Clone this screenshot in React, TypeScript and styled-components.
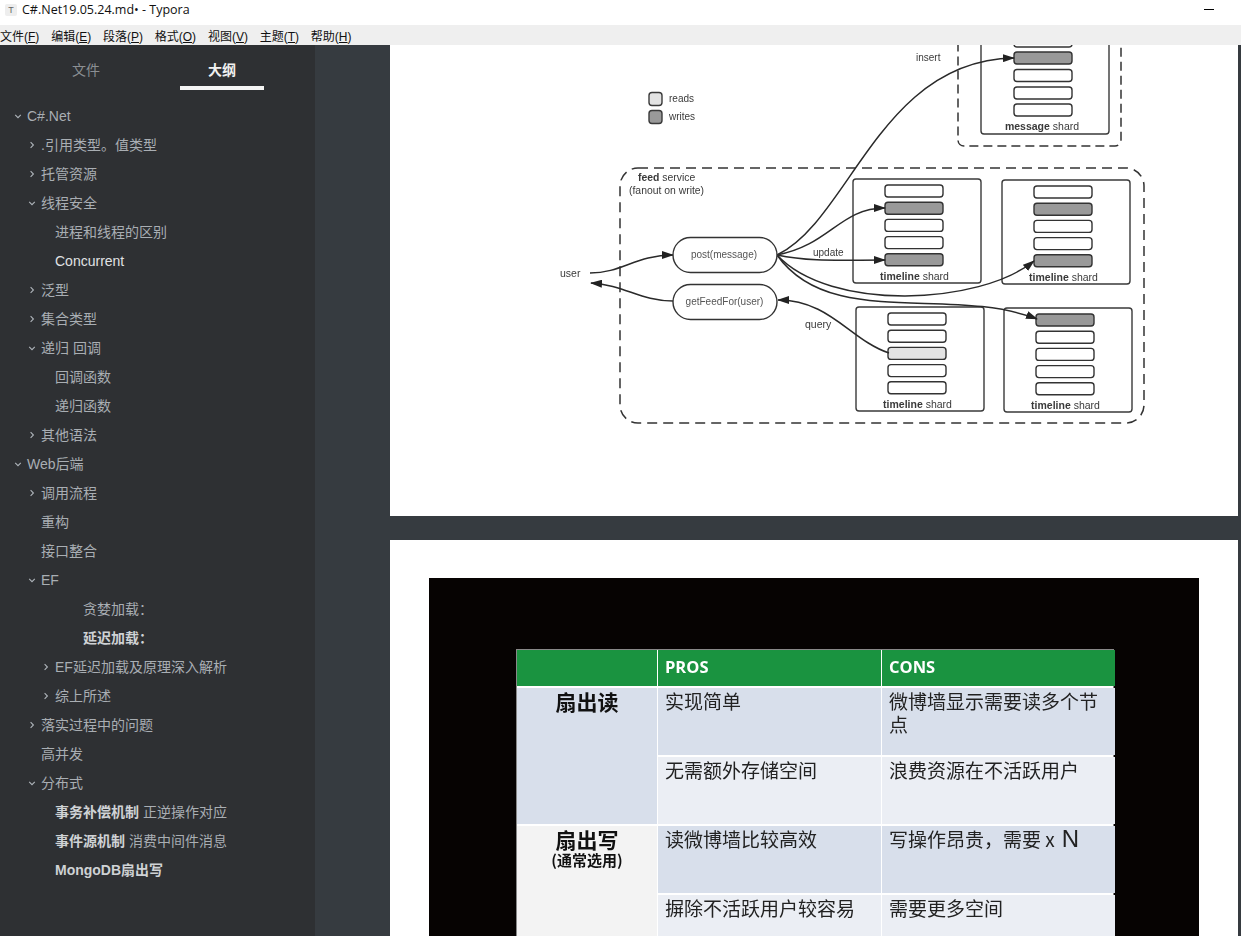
import styled, { createGlobalStyle } from 'styled-components';

const GlobalStyle = createGlobalStyle`
  html, body {
    margin: 0;
    padding: 0;
    height: 100%;
    overflow: hidden;
    background: #363b40;
  }
  * {
    box-sizing: border-box;
  }
`;

const cjk = '"Liberation Sans", "Noto Sans CJK SC", sans-serif';

interface OutlineItem {
  label: string;
  level: number;
  arrow?: 'open' | 'closed';
  strong?: string;
  bright?: boolean;
}

const outline: OutlineItem[] = [
  { label: 'C#.Net', level: 0, arrow: 'open' },
  { label: '.引用类型。值类型', level: 1, arrow: 'closed' },
  { label: '托管资源', level: 1, arrow: 'closed' },
  { label: '线程安全', level: 1, arrow: 'open' },
  { label: '进程和线程的区别', level: 2 },
  { label: 'Concurrent', level: 2, bright: true },
  { label: '泛型', level: 1, arrow: 'closed' },
  { label: '集合类型', level: 1, arrow: 'closed' },
  { label: '递归 回调', level: 1, arrow: 'open' },
  { label: '回调函数', level: 2 },
  { label: '递归函数', level: 2 },
  { label: '其他语法', level: 1, arrow: 'closed' },
  { label: 'Web后端', level: 0, arrow: 'open' },
  { label: '调用流程', level: 1, arrow: 'closed' },
  { label: '重构', level: 1 },
  { label: '接口整合', level: 1 },
  { label: 'EF', level: 1, arrow: 'open' },
  { label: '贪婪加载：', level: 4 },
  { label: '', strong: '延迟加载：', level: 4 },
  { label: 'EF延迟加载及原理深入解析', level: 2, arrow: 'closed' },
  { label: '综上所述', level: 2, arrow: 'closed' },
  { label: '落实过程中的问题', level: 1, arrow: 'closed' },
  { label: '高并发', level: 1 },
  { label: '分布式', level: 1, arrow: 'open' },
  { label: ' 正逆操作对应', strong: '事务补偿机制', level: 2 },
  { label: ' 消费中间件消息', strong: '事件源机制', level: 2 },
  { label: '', strong: 'MongoDB扇出写', level: 2 },
];

const menus = [
  ['文件(', 'F', ')'],
  ['编辑(', 'E', ')'],
  ['段落(', 'P', ')'],
  ['格式(', 'O', ')'],
  ['视图(', 'V', ')'],
  ['主题(', 'T', ')'],
  ['帮助(', 'H', ')'],
];

const Chevron = ({ open }: { open: boolean }) => (
  <svg width="8" height="8" viewBox="0 0 8 8" fill="none" stroke="#aeb4ba" strokeWidth="1.1">
    {open ? <path d="M1.2 2.8 L4 5.6 L6.8 2.8" /> : <path d="M2.6 1.2 L5.4 4 L2.6 6.8" />}
  </svg>
);

const Bar = ({ x, y, fill = '#fff' }: { x: number; y: number; fill?: string }) => (
  <rect x={x} y={y} width="58" height="12" rx="3" fill={fill} stroke="#333" strokeWidth="1.4" />
);

const GRAY = '#999';
const LIGHT = '#e3e3e3';

const Shard = ({
  x,
  y,
  fills,
  name = 'timeline',
}: {
  x: number;
  y: number;
  fills: (string | undefined)[];
  name?: string;
}) => (
  <g>
    <rect x={x} y={y} width="128" height="104" rx="3" fill="#fff" stroke="#3a3a3a" strokeWidth="1.4" />
    {fills.map((fill, i) => (
      <Bar key={i} x={x + 32} y={y + 6 + i * 17.2} fill={fill} />
    ))}
    <text x={x + 61.5} y={y + 101} textAnchor="middle" fontSize="10.5">
      <tspan fontWeight="700">{name}</tspan> shard
    </text>
  </g>
);

const Diagram = () => (
  <DiagramSvg viewBox="390 45 848 471">
    <defs>
      <marker id="head" markerWidth="12" markerHeight="8" refX="11" refY="4" orient="auto" markerUnits="userSpaceOnUse">
        <path d="M0 0 L12 4 L0 8 Z" fill="#222" />
      </marker>
    </defs>

    <rect x="649" y="92.5" width="13" height="13" rx="3" fill={LIGHT} stroke="#3a3a3a" strokeWidth="1.4" />
    <rect x="649" y="110.5" width="13" height="13" rx="3" fill={GRAY} stroke="#3a3a3a" strokeWidth="1.4" />
    <text x="669" y="102">reads</text>
    <text x="669" y="120">writes</text>

    <rect x="958" y="20" width="163" height="126" rx="6" fill="none" stroke="#333" strokeWidth="1.5" strokeDasharray="9 5" />
    <rect x="981" y="20" width="128" height="114" rx="3" fill="#fff" stroke="#3a3a3a" strokeWidth="1.4" />
    <Bar x={1014} y={35} />
    <Bar x={1014} y={52} fill={GRAY} />
    <Bar x={1014} y={69.5} />
    <Bar x={1014} y={87} />
    <Bar x={1014} y={104} />
    <text x="1042" y="130" textAnchor="middle" fontSize="10.5">
      <tspan fontWeight="700">message</tspan> shard
    </text>
    <text x="916" y="61" fontSize="10">insert</text>

    <rect x="620" y="168" width="524" height="255" rx="18" fill="none" stroke="#333" strokeWidth="1.5" strokeDasharray="10 6" />
    <text x="638" y="181" fontSize="10.4"><tspan fontWeight="700">feed</tspan> service</text>
    <text x="629" y="194" fontSize="10.4">(fanout on write)</text>

    <Shard x={853} y={179} fills={[undefined, GRAY, undefined, undefined, GRAY]} />
    <Shard x={1002} y={180} fills={[undefined, GRAY, undefined, undefined, GRAY]} />
    <Shard x={856} y={307} fills={[undefined, undefined, LIGHT, undefined, undefined]} />
    <Shard x={1004} y={308} fills={[GRAY, undefined, undefined, undefined, undefined]} />

    <g fill="none" stroke="#2a2a2a" strokeWidth="1.5">
      <path d="M590 273 C 622 273, 636 255, 673 255" markerEnd="url(#head)" />
      <path d="M673 301 C 640 301, 625 285, 591 283" markerEnd="url(#head)" />
      <path d="M889 353 C 850 340, 830 300, 778 300" markerEnd="url(#head)" />
      <path d="M777 255 C 850 220, 880 60, 1014 58" markerEnd="url(#head)" />
      <path d="M777 255 C 830 245, 840 208, 885 208" markerEnd="url(#head)" />
      <path d="M777 255 C 810 262, 840 260, 885 260" markerEnd="url(#head)" />
      <path d="M777 255 C 830 312, 980 305, 1034 261" markerEnd="url(#head)" />
      <path d="M777 255 C 830 330, 950 285, 1037 319" markerEnd="url(#head)" />
    </g>

    <rect x="673" y="237.5" width="104" height="35" rx="17.5" fill="#fff" stroke="#333" strokeWidth="1.4" />
    <rect x="673" y="284.5" width="104" height="35" rx="17.5" fill="#fff" stroke="#333" strokeWidth="1.4" />
    <text x="724" y="258" textAnchor="middle" fontSize="10" fill="#555">post(message)</text>
    <text x="724.5" y="305" textAnchor="middle" fontSize="10" fill="#555">getFeedFor(user)</text>
    <text x="560" y="277" fontSize="10.5">user</text>
    <text x="813" y="256" fontSize="10">update</text>
    <text x="805" y="328" fontSize="10.5">query</text>
  </DiagramSvg>
);

const App = () => (
  <Page>
    <GlobalStyle />
    <TitleBar>
      <AppIcon>T</AppIcon>
      <TitleText>C#.Net19.05.24.md• - Typora</TitleText>
      <Minimize />
    </TitleBar>
    <MenuBar>
      {menus.map(([head, key, tail]) => (
        <span key={key}>
          {head}
          <u>{key}</u>
          {tail}
        </span>
      ))}
    </MenuBar>
    <Body>
      <Sidebar>
        <Tabs>
          <Tab>文件</Tab>
          <Tab $active>大纲</Tab>
        </Tabs>
        <Outline>
          {outline.map((item, i) => (
            <Row key={i} $level={item.level} $bright={item.bright}>
              <ArrowSlot>{item.arrow && <Chevron open={item.arrow === 'open'} />}</ArrowSlot>
              <RowText>
                {item.strong && <strong>{item.strong}</strong>}
                {item.label}
              </RowText>
            </Row>
          ))}
        </Outline>
      </Sidebar>
      <Content>
        <Picture $height={471}>
          <Diagram />
        </Picture>
        <Picture $height={396}>
          <Slide>
            <CompareTable>
              <HeadCell />
              <HeadCell>PROS</HeadCell>
              <HeadCell>CONS</HeadCell>
              <LabelCell $tone="dark">
                <LabelMain>扇出读</LabelMain>
              </LabelCell>
              <Cell $tone="dark">实现简单</Cell>
              <Cell $tone="dark">微博墙显示需要读多个节点</Cell>
              <Cell $tone="light">无需额外存储空间</Cell>
              <Cell $tone="light">浪费资源在不活跃用户</Cell>
              <LabelCell $tone="plain">
                <LabelMain>扇出写</LabelMain>
                <LabelSub>(通常选用)</LabelSub>
              </LabelCell>
              <Cell $tone="dark">读微博墙比较高效</Cell>
              <Cell $tone="dark">
                写操作昂贵，需要 x<BigLetter>N</BigLetter>
              </Cell>
              <Cell $tone="light">摒除不活跃用户较容易</Cell>
              <Cell $tone="light">需要更多空间</Cell>
            </CompareTable>
          </Slide>
        </Picture>
      </Content>
    </Body>
  </Page>
);

export default App;

const Page = styled.div`
  display: flex;
  flex-direction: column;
  height: 100vh;
  overflow: hidden;
`;

const TitleBar = styled.div`
  display: flex;
  align-items: center;
  flex: 0 0 25px;
  padding: 0 27px 6px 5px;
  background: #fff;
`;

const AppIcon = styled.div`
  display: flex;
  align-items: center;
  justify-content: center;
  width: 12px;
  height: 12px;
  margin-right: 5px;
  border-radius: 2px;
  background: #eee;
  color: #666;
  font: 9px 'Liberation Sans', sans-serif;
`;

const TitleText = styled.div`
  font: 12.5px 'Open Sans', sans-serif;
  color: #111;
`;

const Minimize = styled.div`
  width: 10px;
  height: 1px;
  margin-left: auto;
  background: #000;
`;

const MenuBar = styled.div`
  display: flex;
  align-items: center;
  gap: 11.8px;
  flex: 0 0 20px;
  background: #efefef;
  color: #111;
  font: 12px ${cjk};
`;

const Body = styled.div`
  display: flex;
  flex: 1;
  min-height: 0;
`;

const Sidebar = styled.aside`
  flex: 0 0 315px;
  background: #2e3033;
  font-family: ${cjk};
`;

const Tabs = styled.div`
  display: flex;
  height: 45px;
  padding-left: 44px;
`;

const Tab = styled.div<{ $active?: boolean }>`
  display: flex;
  justify-content: center;
  width: 84px;
  margin-right: ${(p) => (p.$active ? '0' : '52px')};
  padding-top: 16px;
  font-size: 14px;
  line-height: 18px;
  font-weight: ${(p) => (p.$active ? 700 : 400)};
  color: ${(p) => (p.$active ? '#f0f0f0' : '#8b8f93')};
  border-bottom: 4px solid ${(p) => (p.$active ? '#f4f4f4' : 'transparent')};
`;

const Outline = styled.div`
  display: flex;
  flex-direction: column;
  padding-top: 11px;
`;

const Row = styled.div<{ $level: number; $bright?: boolean }>`
  display: flex;
  align-items: center;
  height: 29px;
  padding-left: ${(p) => 13 + p.$level * 14}px;
  font-size: 14px;
  color: ${(p) => (p.$bright ? '#e0e2e4' : '#a9aeb3')};
  white-space: pre;
  strong {
    color: #cfd2d5;
  }
`;

const ArrowSlot = styled.span`
  display: flex;
  align-items: center;
  flex: 0 0 14px;
  height: 10px;
  padding-top: 1px;
  padding-left: 1px;
`;

const RowText = styled.span`
  line-height: 18px;
`;

const Content = styled.main`
  display: flex;
  flex-direction: column;
  gap: 24px;
  flex: 1;
  min-width: 0;
  padding: 0 3px 0 75px;
  overflow: hidden;
`;

const Picture = styled.div<{ $height: number }>`
  flex: 0 0 ${(p) => p.$height}px;
  background: #fff;
  overflow: hidden;
`;

const DiagramSvg = styled.svg`
  display: block;
  width: 848px;
  height: 471px;
  filter: blur(0.35px);
  font-family: 'Liberation Sans', sans-serif;
  font-size: 10px;
  fill: #3a3a3a;
`;

const Slide = styled.div`
  height: 358px;
  margin: 38px 39px 0;
  padding: 71px 85px 0 87px;
  background: #060302;
  overflow: hidden;
`;

const CompareTable = styled.div`
  display: grid;
  grid-template-columns: 140px 223px 233px;
  grid-template-rows: 36px 67px 67px 67px 67px;
  column-gap: 1px;
  row-gap: 2px;
  width: 598px;
  background: #fff;
  border: 1px solid #888;
  border-bottom: none;
  font-family: 'Noto Sans CJK SC', sans-serif;
  filter: blur(0.3px);
`;

const HeadCell = styled.div`
  display: flex;
  align-items: center;
  padding: 0 0 4px 7px;
  background: #1a9340;
  color: #fff;
  font: 700 16.5px 'Open Sans', sans-serif;
`;

const toneColor = { dark: '#d8dfeb', light: '#ebeef4', plain: '#f3f3f3' };

const Cell = styled.div<{ $tone: 'dark' | 'light' }>`
  padding: 1px 7px 0;
  background: ${(p) => toneColor[p.$tone]};
  color: #222;
  font-size: 19px;
  line-height: 23px;
`;

const BigLetter = styled.span`
  margin-left: 7px;
  font: 24px/0 'Liberation Sans', sans-serif;
`;

const LabelCell = styled.div<{ $tone: 'dark' | 'plain' }>`
  grid-row: span 2;
  display: flex;
  flex-direction: column;
  align-items: center;
  background: ${(p) => toneColor[p.$tone]};
  color: #111;
`;

const LabelMain = styled.div`
  font-size: 21px;
  line-height: 26px;
  font-weight: 700;
`;

const LabelSub = styled.div`
  font-size: 15px;
  line-height: 16px;
  font-weight: 700;
`;
